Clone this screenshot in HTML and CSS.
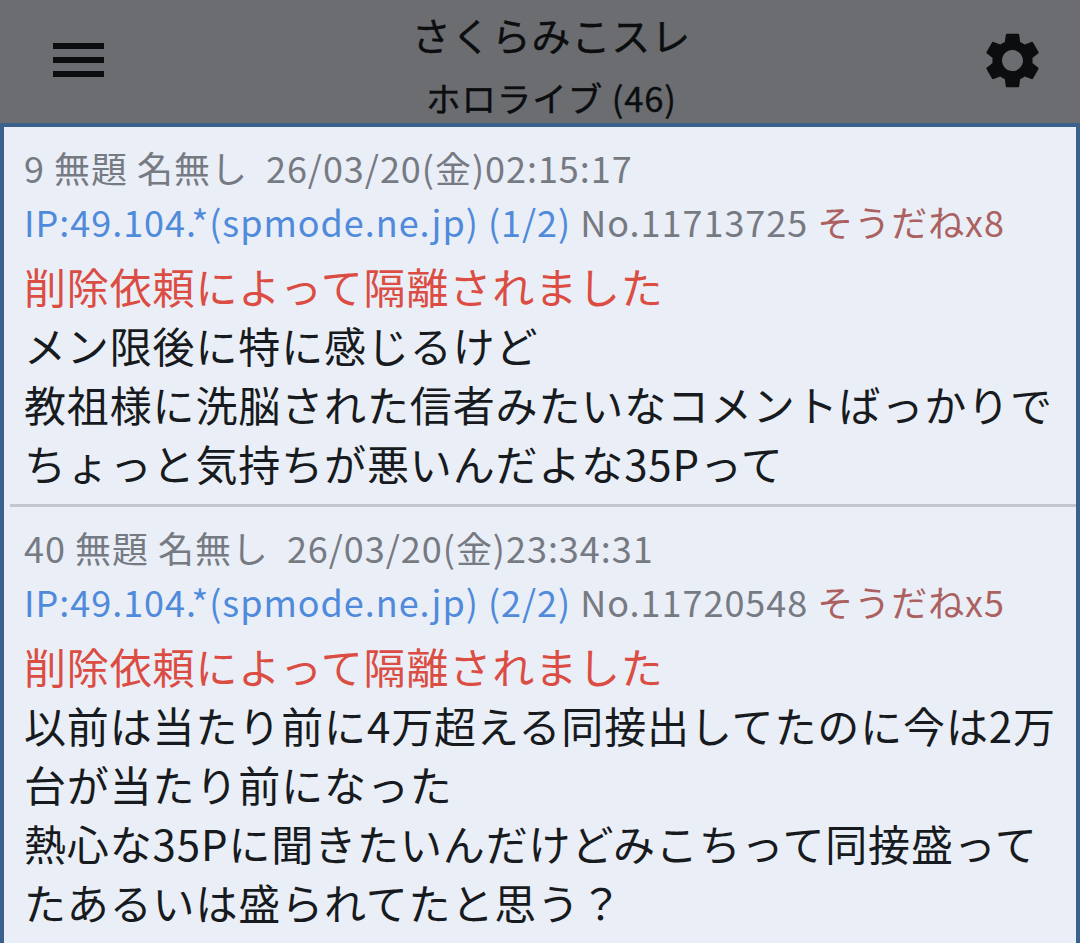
FILE: index.html
```
<!DOCTYPE html>
<html lang="ja">
<head>
  <meta charset="UTF-8" />
  <meta name="viewport" content="width=device-width, initial-scale=1" />
  <title>さくらみこスレ</title>
  <link rel="stylesheet" href="styles.css">
</head>
<body>

  <header class="app-bar">
    <button class="icon-btn menu-btn" aria-label="メニュー">
      <svg viewBox="0 0 51 34" width="51" height="34"><path d="M0 0h51v6H0zM0 14h51v6H0zM0 28h51v6H0z"/></svg>
    </button>
    <div class="titles">
      <h1 class="title">さくらみこスレ</h1>
      <div class="subtitle">ホロライブ (46)</div>
    </div>
    <button class="icon-btn gear-btn" aria-label="設定">
      <svg viewBox="0 0 24 24" width="67" height="67"><path d="M19.14 12.94c.04-.3.06-.61.06-.94 0-.32-.02-.64-.07-.94l2.03-1.58c.18-.14.23-.41.12-.61l-1.92-3.32c-.12-.22-.37-.29-.59-.22l-2.39.96c-.5-.38-1.03-.7-1.62-.94l-.36-2.54c-.04-.24-.24-.41-.48-.41h-3.84c-.24 0-.43.17-.47.41l-.36 2.54c-.59.24-1.13.57-1.62.94l-2.39-.96c-.22-.08-.47 0-.59.22L2.74 8.87c-.12.21-.08.47.12.61l2.03 1.58c-.05.3-.09.63-.09.94s.02.64.07.94l-2.03 1.58c-.18.14-.23.41-.12.61l1.92 3.32c.12.22.37.29.59.22l2.39-.96c.5.38 1.03.7 1.62.94l.36 2.54c.05.24.24.41.48.41h3.84c.24 0 .44-.17.47-.41l.36-2.54c.59-.24 1.13-.56 1.62-.94l2.39.96c.22.08.47 0 .59-.22l1.92-3.32c.12-.22.07-.47-.12-.61l-2.01-1.58zM12 15.75c-2.07 0-3.75-1.68-3.75-3.75s1.68-3.75 3.75-3.75 3.75 1.68 3.75 3.75-1.68 3.75-3.75 3.75z"/></svg>
    </button>
  </header>

  <main class="popup">
    <article class="post">
      <div class="meta">9 無題 名無し&nbsp; 26/03/20(金)02:15:17</div>
      <div class="meta"><span class="ip">IP:49.104.*(spmode.ne.jp) (1/2)</span> No.11713725 <span class="like">そうだねx8</span></div>
      <div class="body">
        <div class="isolated">削除依頼によって隔離されました</div>
        <div>メン限後に特に感じるけど</div>
        <div>教祖様に洗脳された信者みたいなコメントばっかりで</div>
        <div>ちょっと気持ちが悪いんだよな35Pって</div>
      </div>
    </article>
    <article class="post">
      <div class="meta">40 無題 名無し&nbsp; 26/03/20(金)23:34:31</div>
      <div class="meta"><span class="ip">IP:49.104.*(spmode.ne.jp) (2/2)</span> No.11720548 <span class="like">そうだねx5</span></div>
      <div class="body">
        <div class="isolated">削除依頼によって隔離されました</div>
        <div>以前は当たり前に4万超える同接出してたのに今は2万</div>
        <div>台が当たり前になった</div>
        <div>熱心な35Pに聞きたいんだけどみこちって同接盛って</div>
        <div>たあるいは盛られてたと思う？</div>
      </div>
    </article>
  </main>

</body>
</html>
```
FILE: styles.css
```
* {
  box-sizing: border-box;
}

body {
  margin: 0;
  height: 943px;
  overflow: hidden;
  display: flex;
  flex-direction: column;
  background-color: #6c6d71;
  font-family: "Noto Sans CJK JP", sans-serif;
}

.app-bar {
  height: 123px;
  flex: none;
  display: flex;
  justify-content: space-between;
  padding: 0 34px 0 53px;
  color: #0b0d0f;
}

.icon-btn {
  background: none;
  border: none;
  padding: 0;
  height: 120px;
  width: 67px;
  display: flex;
  align-items: center;
}

.icon-btn svg {
  display: block;
  flex: none;
  fill: #0b0d0f;
}

.titles {
  padding-left: 4px;
  text-align: center;
  letter-spacing: 0.9px;
  -webkit-text-stroke: 0.4px #0b0d0f;
}

.title {
  margin: 3px 0 0;
  font-size: 39px;
  font-weight: 400;
  line-height: 62px;
}

.subtitle {
  font-size: 34.5px;
  font-weight: 400;
  line-height: 64px;
}

.popup {
  flex: 1;
  border: 4px solid #3a618c;
  border-bottom: none;
  background-color: #eaeef7;
}

.post {
  height: 380px;
  margin-left: 6px;
  padding: 13px 0 0 14px;
  border-bottom: 3px solid #c2c6ce;
  white-space: nowrap;
}

.post:last-child {
  border-bottom: none;
}

.meta {
  font-size: 36px;
  line-height: 54px;
  letter-spacing: 0.97px;
  color: #767a82;
}

.ip {
  color: #4f8adb;
}

.like {
  color: #ab615f;
}

.body {
  margin-top: 8px;
  font-size: 42px;
  line-height: 59px;
  letter-spacing: 0.87px;
  color: #171b20;
}

.isolated {
  color: #db4d43;
}
```
